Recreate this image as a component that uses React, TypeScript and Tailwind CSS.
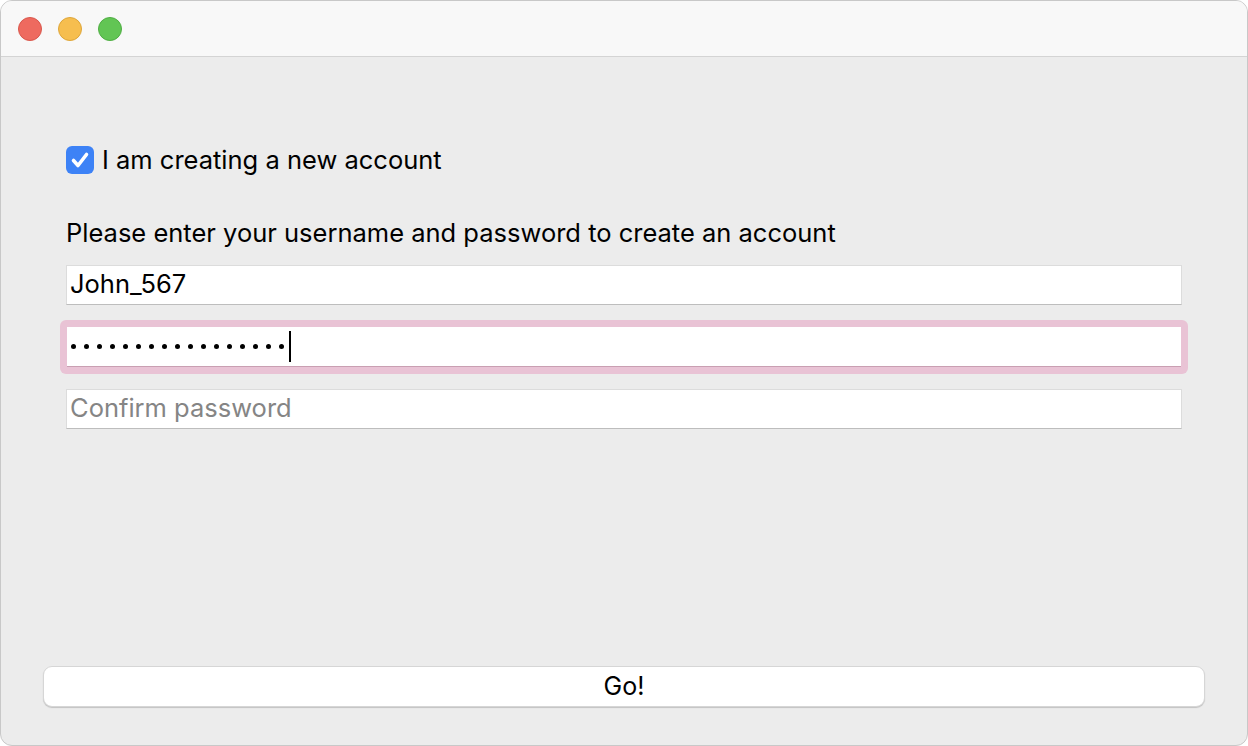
import { useState } from "react";

const FONT = { fontFamily: "Inter, 'Liberation Sans', sans-serif" };

function TrafficLights() {
  return (
    <div className="flex items-center gap-4 pl-[17px]">
      <span className="w-6 h-6 rounded-full bg-[#ee6a5f] border border-[#d9574c]" />
      <span className="w-6 h-6 rounded-full bg-[#f6be4f] border border-[#dea63a]" />
      <span className="w-6 h-6 rounded-full bg-[#62c554] border border-[#4fae43]" />
    </div>
  );
}

export default function App() {
  const [checked, setChecked] = useState(true);
  const dots = Array.from({ length: 17 });

  return (
    <div className="w-[1248px] h-[746px] bg-white" style={FONT}>
      <div className="w-full h-full rounded-[12px] border border-[#c8c8c8] overflow-hidden flex flex-col bg-[#ececec]">
        {/* Title bar */}
        <div className="h-[56px] shrink-0 flex items-center bg-[#f8f8f8] border-b border-[#d4d4d4]">
          <TrafficLights />
        </div>

        {/* Content */}
        <div className="flex-1 flex flex-col px-[65px] pt-[89px]">
          <label className="flex items-center gap-[8px] text-[25.5px] text-black leading-none cursor-default">
            <button
              onClick={() => setChecked(v => !v)}
              className="w-[28px] h-[28px] rounded-[6px] bg-[#3d82f6] flex items-center justify-center"
            >
              {checked && (
                <svg width="22" height="22" viewBox="0 0 22 22" fill="none">
                  <path d="M4.5 11.5l4.5 5 8.5-11" stroke="white" strokeWidth="3.6" strokeLinecap="round" strokeLinejoin="round" />
                </svg>
              )}
            </button>
            I am creating a new account
          </label>

          <p className="mt-[46px] text-[25.5px] leading-none text-black">
            Please enter your username and password to create an account
          </p>

          <div className="mt-[19px] flex flex-col">
            <div className="h-[40px] bg-white border-t border-x border-[#dcdcdc] border-b border-b-[#bdbdbd] flex items-center px-[3px] text-[25.5px] text-black">
              John_567
            </div>

            <div className="mt-[15px] -mx-[6px] p-[7px] rounded-[6px] bg-[#e9c3d5]">
              <div className="h-[40px] bg-white border-b border-[#c99fb2] flex items-center pl-[4px]">
                <div className="flex items-center gap-[8px]">
                  {dots.map((_, i) => (
                    <span key={i} className="w-[5px] h-[5px] rounded-full bg-black" />
                  ))}
                </div>
                <span className="w-[2px] h-[31px] bg-black ml-[5px]" />
              </div>
            </div>

            <div className="mt-[15px] h-[40px] bg-white border-t border-x border-[#dcdcdc] border-b border-b-[#bdbdbd] flex items-center px-[3px] text-[25.5px] text-[#858585]">
              Confirm password
            </div>
          </div>

          <div className="flex-1" />

          <button className="-mx-[23px] mb-[38px] h-[41px] rounded-[9px] bg-white border border-[#d6d6d6] shadow-[0_1px_1px_rgba(0,0,0,0.18)] text-[25px] leading-none text-black">
            Go!
          </button>
        </div>
      </div>
    </div>
  );
}
